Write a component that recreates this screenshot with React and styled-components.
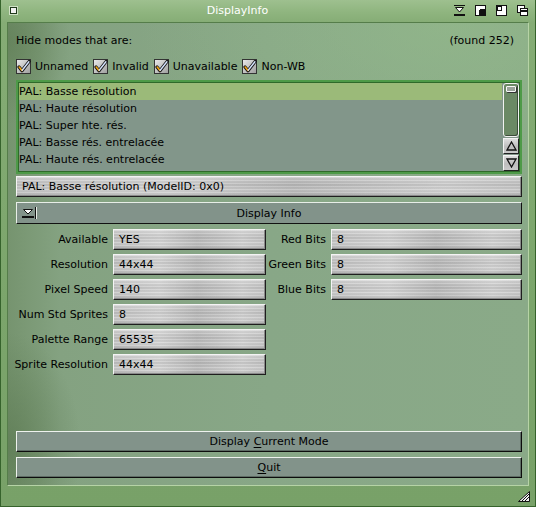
import React from "react";
import styled, { createGlobalStyle } from "styled-components";

const GlobalStyle = createGlobalStyle`
  html, body {
    margin: 0;
    padding: 0;
    background: #7ca46c;
  }
  body {
    font-family: "DejaVu Sans", "Liberation Sans", sans-serif;
    font-size: 11px;
    color: #000;
  }
  * { box-sizing: border-box; }
`;

const modes = [
  "PAL: Basse résolution",
  "PAL: Haute résolution",
  "PAL: Super hte. rés.",
  "PAL: Basse rés. entrelacée",
  "PAL: Haute rés. entrelacée",
];

const filters = ["Unnamed", "Invalid", "Unavailable", "Non-WB"];

const infoRows = [
  ["Available", "YES", "Red Bits", "8"],
  ["Resolution", "44x44", "Green Bits", "8"],
  ["Pixel Speed", "140", "Blue Bits", "8"],
  ["Num Std Sprites", "8"],
  ["Palette Range", "65535"],
  ["Sprite Resolution", "44x44"],
];

function CheckIcon() {
  return (
    <svg width="15" height="15" viewBox="0 0 15 15">
      <defs>
        <linearGradient id="cbg" x1="0" y1="0" x2="1" y2="1">
          <stop offset="0" stopColor="#ececec" />
          <stop offset="1" stopColor="#9c9c9c" />
        </linearGradient>
      </defs>
      <rect x="0.5" y="0.5" width="14" height="14" fill="url(#cbg)" stroke="#333" />
      <path d="M3 8 L6 11.8 L13.2 2.4" fill="none" stroke="#151515" strokeWidth="3.2" strokeLinecap="round" strokeLinejoin="round" />
      <path d="M3.2 8.1 L6 11.4" fill="none" stroke="#f5a814" strokeWidth="1.6" strokeLinecap="round" />
      <path d="M6.2 11.2 L12.9 2.7" fill="none" stroke="#d6e4ff" strokeWidth="1.4" strokeLinecap="round" />
    </svg>
  );
}

function TitleGadget({ kind }) {
  return (
    <svg width="11" height="11" viewBox="0 0 11 11" shapeRendering="crispEdges">
      {kind === "iconify" && (
        <>
          <rect x="0" y="0" width="11" height="1" fill="#111" />
          <path d="M1.5 2.5 L9.5 2.5 L5.5 7 Z" fill="#fff" stroke="#111" shapeRendering="auto" />
          <rect x="0" y="9" width="11" height="2" fill="#111" />
        </>
      )}
      {kind === "zoom" && (
        <>
          <rect x="0.5" y="0.5" width="10" height="10" fill="#fff" stroke="#111" />
          <rect x="4" y="4" width="6" height="6" fill="#111" />
          <rect x="1" y="1" width="4" height="4" fill="#fff" />
        </>
      )}
      {kind === "snap" && (
        <>
          <rect x="0.5" y="0.5" width="10" height="10" fill="#fff" stroke="#111" />
          <rect x="1" y="1" width="5" height="5" fill="#111" />
          <rect x="2" y="2" width="3" height="3" fill="#fff" />
        </>
      )}
      {kind === "depth" && (
        <>
          <rect x="0.5" y="0.5" width="7" height="7" fill="#fff" stroke="#111" />
          <rect x="3.5" y="3.5" width="7" height="7" fill="#fff" stroke="#111" />
          <rect x="4" y="5" width="6" height="2" fill="#111" />
        </>
      )}
    </svg>
  );
}

function ArrowIcon({ up }) {
  return (
    <svg width="11" height="10" viewBox="0 0 11 10">
      <path
        d={up ? "M5.5 1 L10 9 L1 9 Z" : "M1 1 L10 1 L5.5 9 Z"}
        fill="none"
        stroke="#111"
        strokeWidth="1.3"
      />
    </svg>
  );
}

function PopIcon() {
  return (
    <svg width="12" height="10" viewBox="0 0 12 10" shapeRendering="crispEdges">
      <path d="M1.5 1.5 L10.5 1.5 L6 6 Z" fill="#fff" stroke="#111" shapeRendering="auto" />
      <rect x="0" y="8" width="12" height="1.5" fill="#111" />
    </svg>
  );
}

function ResizeIcon() {
  return (
    <svg width="12" height="11" viewBox="0 0 12 11">
      <path d="M0.5 10.5 L11.5 10.5 L11.5 0.5 Z" fill="#f0f0f0" stroke="#111" />
      <path d="M4 10 L11 3 M7 10 L11 6" stroke="#111" strokeWidth="1" />
    </svg>
  );
}

export default function App() {
  return (
    <>
      <GlobalStyle />
      <Window>
        <TitleBar>
          <CloseGadget />
          <Title>DisplayInfo</Title>
          <Gadgets>
            <TitleGadget kind="iconify" />
            <TitleGadget kind="zoom" />
            <TitleGadget kind="snap" />
            <TitleGadget kind="depth" />
          </Gadgets>
        </TitleBar>
        <Frame>
          <Panel>
            <Header>
              <span>Hide modes that are:</span>
              <span>(found 252)</span>
            </Header>
            <Filters>
              {filters.map((f) => (
                <Check key={f}>
                  <CheckIcon />
                  <span>{f}</span>
                </Check>
              ))}
            </Filters>
            <ModeList>
              <Rows>
                {modes.map((m, i) => (
                  <Row key={m} $selected={i === 0}>
                    {m}
                  </Row>
                ))}
              </Rows>
              <Scroller>
                <Track>
                  <Knob />
                </Track>
                <ArrowButton>
                  <ArrowIcon up />
                </ArrowButton>
                <ArrowButton>
                  <ArrowIcon />
                </ArrowButton>
              </Scroller>
            </ModeList>
            <Field $top>PAL: Basse résolution (ModelID: 0x0)</Field>
            <InfoBar>
              <PopButton>
                <PopIcon />
              </PopButton>
              <InfoTitle>Display Info</InfoTitle>
            </InfoBar>
            <InfoGrid>
              {infoRows.map(([l1, v1, l2, v2]) => (
                <React.Fragment key={l1}>
                  <Label>{l1}</Label>
                  <Field>{v1}</Field>
                  {l2 ? (
                    <>
                      <Label>{l2}</Label>
                      <Field>{v2}</Field>
                    </>
                  ) : (
                    <Empty />
                  )}
                </React.Fragment>
              ))}
            </InfoGrid>
            <Spacer />
            <Buttons>
              <Button>
                <span>
                  Display <u>C</u>urrent Mode
                </span>
              </Button>
              <Button>
                <span>
                  <u>Q</u>uit
                </span>
              </Button>
            </Buttons>
          </Panel>
        </Frame>
        <Grip>
          <ResizeIcon />
        </Grip>
      </Window>
    </>
  );
}

const Window = styled.div`
  position: relative;
  width: 536px;
  height: 507px;
  display: flex;
  flex-direction: column;
  background: linear-gradient(180deg, #86ad76 0%, #7ba56b 60%, #78a168 100%);
  border-left: 1px solid #36632c;
  border-right: 1px solid #36632c;
  border-bottom: 1px solid #36632c;
  overflow: hidden;
`;

const TitleBar = styled.div`
  height: 22px;
  display: flex;
  align-items: center;
  padding: 0 7px 0 9px;
  background: linear-gradient(180deg, #9ec08f 0%, #8fb57f 55%, #86ad76 100%);
`;

const CloseGadget = styled.div`
  width: 7px;
  height: 7px;
  margin-top: -1px;
  border: 1px solid #1f3a1a;
  background: #f2f2f2;
  box-shadow: 0 0 0 1px #cfe0c4;
`;

const Title = styled.div`
  flex: 1;
  text-align: center;
  color: #fff;
  font-size: 11px;
  line-height: 22px;
  padding-left: 4px;
`;

const Gadgets = styled.div`
  display: flex;
  gap: 10px;
  align-items: center;
  margin-top: -1px;
`;

const Frame = styled.div`
  flex: 1;
  display: flex;
  padding: 0 6px 20px 6px;
`;

const Panel = styled.div`
  flex: 1;
  display: flex;
  flex-direction: column;
  border: 1px solid;
  border-color: #557d4a #b6d3a6 #b6d3a6 #557d4a;
  padding: 11px 6px 7px 8px;
  background:
    radial-gradient(ellipse 60% 35% at 85% 0%, rgba(150, 190, 140, 0.55), rgba(150, 190, 140, 0) 100%),
    radial-gradient(ellipse 14% 25% at 0% 92%, rgba(90, 120, 80, 0.7), rgba(90, 120, 80, 0) 100%),
    radial-gradient(ellipse 12% 18% at 0% 4%, rgba(95, 125, 85, 0.7), rgba(95, 125, 85, 0) 100%),
    linear-gradient(90deg, #76946f 0%, #84a281 10%, #88a787 50%, #8aaa88 100%);
`;

const Header = styled.div`
  display: flex;
  justify-content: space-between;
  line-height: 13px;
  height: 13px;
  padding-right: 8px;
`;

const Filters = styled.div`
  display: flex;
  align-items: center;
  gap: 5px;
  margin-top: 12px;
  height: 15px;
`;

const Check = styled.div`
  display: flex;
  align-items: center;
  gap: 4px;
  line-height: 15px;
  svg { flex: none; }
`;

const ModeList = styled.div`
  margin-top: 6px;
  height: 94px;
  display: flex;
  border: 2px solid #4e9a48;
  box-shadow: inset 0 0 0 1px #2f6a2a;
  background: #82968a;
  padding: 1px;
`;

const Rows = styled.div`
  flex: 1;
  display: flex;
  flex-direction: column;
  overflow: hidden;
`;

const Row = styled.div`
  height: 17px;
  line-height: 17px;
  padding-left: 0;
  flex: none;
  background: ${({ $selected }) => ($selected ? "#9bba79" : "transparent")};
`;

const Scroller = styled.div`
  width: 17px;
  display: flex;
  flex-direction: column;
  gap: 1px;
  padding-left: 1px;
`;

const Track = styled.div`
  flex: 1;
  border: 1px solid #f2f2f2;
  border-radius: 3px;
  background: #6b8965;
  box-shadow: inset -1px -1px 0 #3c4d3a;
  padding: 2px;
`;

const Knob = styled.div`
  height: 6px;
  border: 1px solid #f8f8f8;
  border-radius: 1px;
  background: #9aa39a;
  box-shadow: 1px 1px 0 #333;
`;

const ArrowButton = styled.div`
  height: 16px;
  display: flex;
  align-items: center;
  justify-content: center;
  border: 1px solid;
  border-color: #f4f4f4 #222 #222 #f4f4f4;
  background: linear-gradient(180deg, #dedede 0%, #bdbdbd 55%, #c9c9c9 100%);
`;

const Field = styled.div`
  height: 21px;
  margin-top: ${({ $top }) => ($top ? "2px" : "0")};
  display: flex;
  align-items: center;
  padding-left: 5px;
  border: 1px solid;
  border-color: #f4f4f4 #1e1e1e #1e1e1e #f4f4f4;
  box-shadow: inset -1px -1px 0 #8a8a8a;
  white-space: nowrap;
  background:
    repeating-linear-gradient(180deg, rgba(255, 255, 255, 0.12) 0 1px, rgba(0, 0, 0, 0.05) 1px 3px),
    linear-gradient(90deg, rgba(255, 255, 255, 0) 0%, rgba(255, 255, 255, 0.25) 30%, rgba(0, 0, 0, 0.05) 55%, rgba(255, 255, 255, 0.2) 85%, rgba(255, 255, 255, 0) 100%),
    linear-gradient(180deg, #d6d6d6 0%, #c0c0c0 40%, #cdcdcd 70%, #b7b7b7 100%);
`;

const InfoBar = styled.div`
  margin-top: 5px;
  height: 22px;
  display: flex;
  align-items: center;
  border: 1px solid;
  border-color: #e8eee8 #111 #111 #e8eee8;
  background: #82938a;
`;

const PopButton = styled.div`
  width: 19px;
  height: 12px;
  padding-left: 5px;
  display: flex;
  align-items: center;
  border-right: 1px solid #111;
  box-shadow: 1px 0 0 #e8eee8;
`;

const InfoTitle = styled.div`
  flex: 1;
  text-align: center;
  padding-right: 19px;
`;

const InfoGrid = styled.div`
  margin-top: 5px;
  display: grid;
  grid-template-columns: 97px 153px 65px 1fr;
  grid-auto-rows: 21px;
  row-gap: 4px;
`;

const Label = styled.div`
  display: flex;
  align-items: center;
  justify-content: flex-end;
  padding-right: 5px;
  white-space: nowrap;
`;

const Empty = styled.div`
  grid-column: span 2;
`;

const Spacer = styled.div`
  flex: 1;
`;

const Buttons = styled.div`
  display: flex;
  flex-direction: column;
  gap: 5px;
`;

const Button = styled.div`
  height: 21px;
  display: flex;
  align-items: center;
  justify-content: center;
  border: 1px solid;
  border-color: #eef2ee #0c0c0c #0c0c0c #eef2ee;
  box-shadow: inset -1px -1px 0 #5e6c64;
  background: #82938a;
  u { text-underline-offset: 2px; }
`;

const Grip = styled.div`
  position: absolute;
  right: 5px;
  bottom: 4px;
  line-height: 0;
`;
